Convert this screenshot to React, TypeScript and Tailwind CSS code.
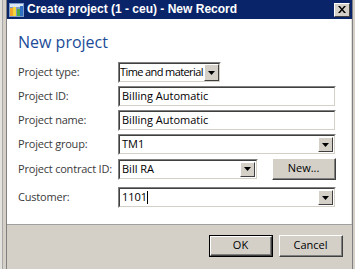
import type { ReactNode } from 'react';

const ui = "font-['Open_Sans',sans-serif]";

// Classic win32 sunken edit box
function Sunken({ w, children }: { w: string; children: ReactNode }) {
  return (
    <div className={`${w} h-[21px] border-t border-l border-[#808080] border-r border-b border-r-white border-b-white`}>
      <div className="h-full border-t border-l border-[#404040] border-r border-b border-r-[#d4d0c8] border-b-[#d4d0c8] bg-white flex items-center">
        {children}
      </div>
    </div>
  );
}

function DropBtn({ big }: { big?: boolean }) {
  return (
    <div
      className={`${big ? 'w-[15px] h-[17px]' : 'w-[15px] h-[15px] mr-px'} shrink-0 bg-[#d4d0c8] border-t border-l border-white border-r border-b border-r-[#404040] border-b-[#404040] flex items-center justify-center`}
    >
      <svg width="7" height="4" viewBox="0 0 7 4">
        <path d="M0 0h7L3.5 4z" fill="#000" />
      </svg>
    </div>
  );
}

function Row({ label, children }: { label: string; children: ReactNode }) {
  return (
    <div className="flex items-center">
      <div className={`w-[100px] text-[11px] text-[#3a3a3a] tracking-[-0.2px] ${ui}`}>{label}</div>
      {children}
    </div>
  );
}

function Btn({ label, def }: { label: string; def?: boolean }) {
  return (
    <div className={`w-[64px] h-[22px] ${def ? 'border border-black' : ''}`}>
      <div className="h-full border-t border-l border-white border-r border-b border-r-[#404040] border-b-[#404040] bg-[#d4d0c8]">
        <div className={`h-full border-r border-b border-[#808080] flex items-center justify-center text-[11px] text-black ${ui}`}>
          {label}
        </div>
      </div>
    </div>
  );
}

function AppIcon() {
  return (
    <svg width="15" height="14" viewBox="0 0 15 14">
      <rect x="0" y="0" width="15" height="14" fill="#7d9bc8" />
      <rect x="1" y="1" width="13" height="3" fill="#dbe6f4" />
      <rect x="1" y="5" width="3" height="8" fill="#f1a52c" />
      <rect x="4" y="4" width="3" height="9" fill="#f5d63c" />
      <rect x="8" y="6" width="3" height="7" fill="#4caa44" />
      <rect x="11" y="3" width="3" height="10" fill="#2f6fc4" />
    </svg>
  );
}

export default function App() {
  return (
    <div className="w-[355px] h-[269px] flex bg-[#d4d0c8] overflow-hidden">
      {/* left frame */}
      <div className="flex shrink-0">
        <div className="w-[2px] bg-[#e4e2dc]" />
        <div className="w-px bg-[#a8a8a8]" />
        <div className="w-[3px] bg-[#d4d0c8]" />
        <div className="w-px bg-[#808080]" />
      </div>

      <div className="w-[345px] flex flex-col">
        {/* title bar */}
        <div className="h-[19px] bg-[#0a246a] flex items-center pl-[2px] pr-[2px]">
          <AppIcon />
          <span className="ml-[3px] text-white font-bold text-[12px] leading-[19px] font-['Liberation_Sans',sans-serif] flex-1">
            Create project (1 - ceu) - New Record
          </span>
          <div className="w-[16px] h-[14px] bg-[#d4d0c8] border-t border-l border-white border-r border-b border-r-[#404040] border-b-[#404040] flex items-center justify-center">
            <svg width="8" height="7" viewBox="0 0 8 7">
              <path d="M0 0h2l2 2.5L6 0h2L5 3.5 8 7H6L4 4.5 2 7H0l3-3.5z" fill="#000" />
            </svg>
          </div>
        </div>

        {/* form body */}
        <div className="h-[205px] bg-white pl-[11px] pt-[12px] border-r border-[#e2e0da]">
          <div className={`text-[16px] leading-[22px] text-[#1c4c98] ${ui}`}>New project</div>

          <div className="mt-[9px] flex flex-col gap-[3px]">
            <Row label="Project type:">
              <Sunken w="w-[103px]">
                <span className={`flex-1 text-[11px] tracking-[-0.6px] text-black whitespace-nowrap overflow-hidden ${ui}`}>Time and material</span>
                <DropBtn big />
              </Sunken>
            </Row>
            <Row label="Project ID:">
              <Sunken w="w-[218px]">
                <span className={`pl-[2px] text-[11px] text-black ${ui}`}>Billing Automatic</span>
              </Sunken>
            </Row>
            <Row label="Project name:">
              <Sunken w="w-[218px]">
                <span className={`pl-[2px] text-[11px] text-black ${ui}`}>Billing Automatic</span>
              </Sunken>
            </Row>
            <Row label="Project group:">
              <Sunken w="w-[218px]">
                <span className={`flex-1 pl-[2px] text-[11px] text-black ${ui}`}>TM1</span>
                <DropBtn />
              </Sunken>
            </Row>
            <Row label="Project contract ID:">
              <Sunken w="w-[140px]">
                <span className={`flex-1 pl-[2px] text-[11px] text-black ${ui}`}>Bill RA</span>
                <DropBtn />
              </Sunken>
              <div className="ml-[14px]">
                <Btn label="New..." />
              </div>
            </Row>
          </div>

          <div className="mt-[7px]">
            <Row label="Customer:">
              <Sunken w="w-[218px]">
                <span className={`flex-1 pl-[2px] text-[11px] text-black flex items-center ${ui}`}>
                  1101<span className="inline-block w-px h-[13px] bg-black" />
                </span>
                <DropBtn />
              </Sunken>
            </Row>
          </div>
        </div>

        <div className="h-px bg-[#a0a0a0]" />

        {/* footer */}
        <div className="flex-1 flex justify-end gap-[6px] pt-[10px] pr-[9px]">
          <Btn label="OK" def />
          <Btn label="Cancel" />
        </div>
      </div>

      {/* right frame */}
      <div className="flex shrink-0">
        <div className="w-px bg-[#808080]" />
        <div className="w-[2px] bg-[#d4d0c8]" />
      </div>
    </div>
  );
}
